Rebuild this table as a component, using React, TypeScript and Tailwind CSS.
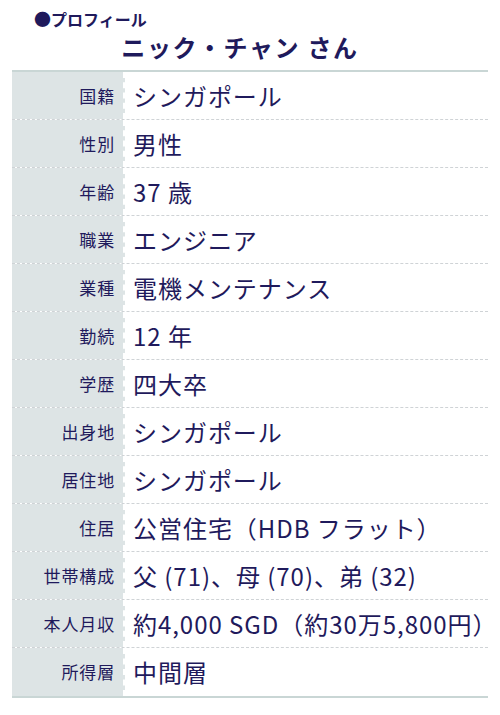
import React from "react";

const rows: [string, string][] = [
  ["国籍", "シンガポール"],
  ["性別", "男性"],
  ["年齢", "37 歳"],
  ["職業", "エンジニア"],
  ["業種", "電機メンテナンス"],
  ["勤続", "12 年"],
  ["学歴", "四大卒"],
  ["出身地", "シンガポール"],
  ["居住地", "シンガポール"],
  ["住居", "公営住宅（HDB フラット）"],
  ["世帯構成", "父 (71)、母 (70)、弟 (32)"],
  ["本人月収", "約4,000 SGD（約30万5,800円）"],
  ["所得層", "中間層"],
];

export default function App() {
  return (
    <div
      className="w-[500px] h-[715px] bg-white text-[#1f1a5c]"
      style={{ fontFamily: '"Noto Sans CJK JP", "Noto Sans", sans-serif' }}
    >
      <div className="pl-[34px] pt-[7px] h-[30px] text-[16px] font-bold leading-[20px] flex items-center">
        <span className="text-[17px]">●</span>プロフィール
      </div>
      <div className="h-[40px] flex justify-center pr-[20px] text-[24px] font-bold tracking-[0.07em] leading-[34px]">
        ニック・チャン さん
      </div>
      <div className="mx-[12px] border-t-2 border-b-2 border-[#c9d6d5]">
        {rows.map(([k, v], i) => (
          <div
            key={k}
            className={
              "flex h-[48px] " +
              (i < rows.length - 1 ? "border-b border-dashed border-[#cfd3d6]" : "")
            }
          >
            <div className="w-[113px] shrink-0 bg-[#dde4e5] border-r-2 border-dashed border-white flex items-center justify-end pr-[8px] text-[17px] tracking-[0.05em]">
              {k}
            </div>
            <div className="flex-1 flex items-center pl-[8px] text-[24px] whitespace-nowrap tracking-[0.04em]">
              {v}
            </div>
          </div>
        ))}
      </div>
    </div>
  );
}
